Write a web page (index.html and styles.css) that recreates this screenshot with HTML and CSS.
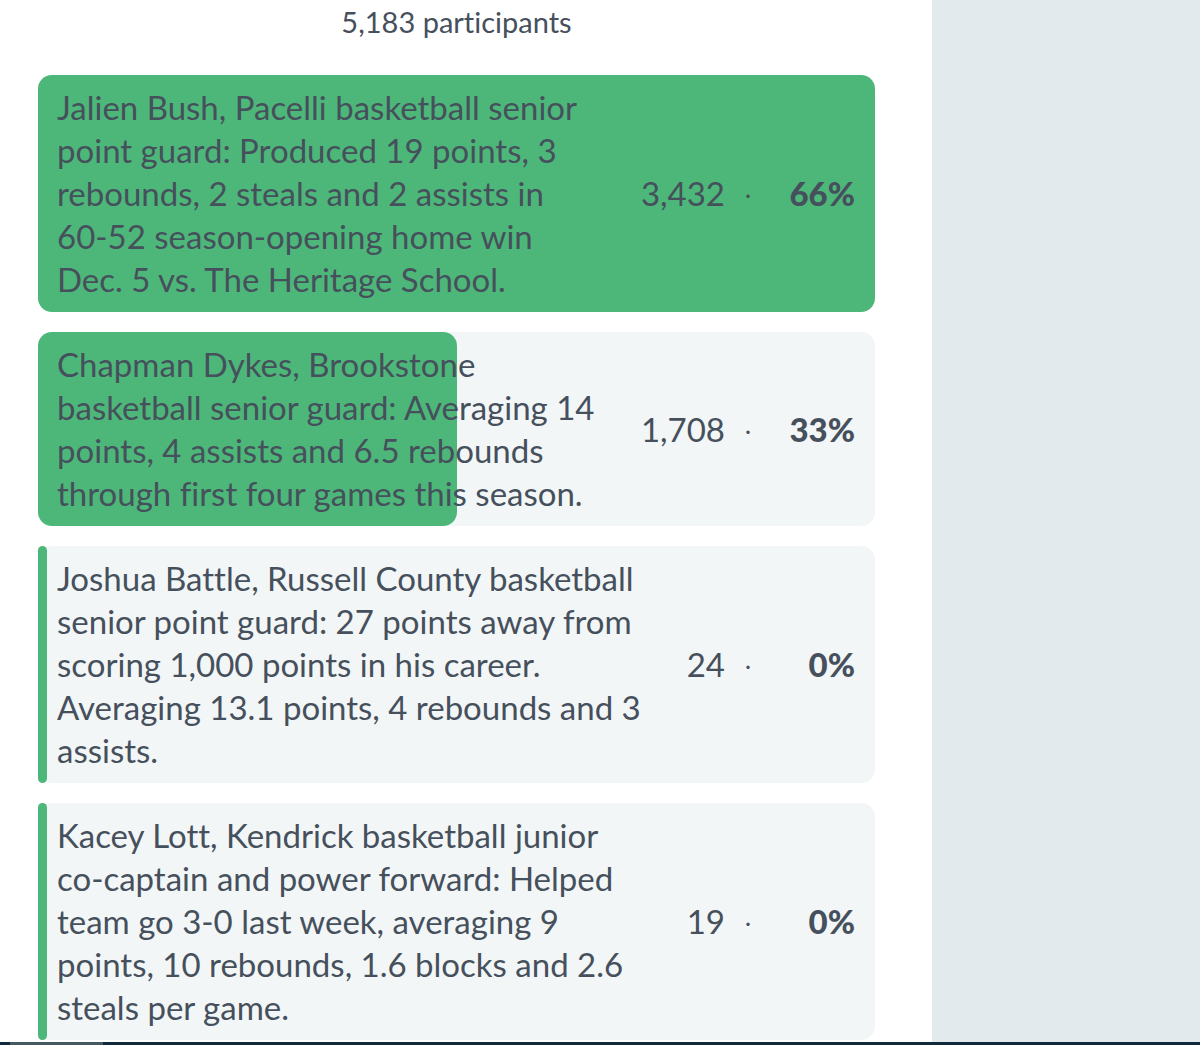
FILE: index.html
```html
<!DOCTYPE html>
<html lang="en">

<head>
  <meta charset="UTF-8">
  <meta name="viewport" content="width=device-width, initial-scale=1.0">
  <title>Poll Results</title>
  <link rel="stylesheet" href="styles.css">
</head>

<body>

  <div class="page">

    <main class="poll">

      <p class="participants">5,183 participants</p>

      <ul class="results">

        <li class="result">
          <div class="fill" style="width: 100%"></div>
          <p class="answer">Jalien Bush, Pacelli basketball senior<br>
            point guard: Produced 19 points, 3<br>
            rebounds, 2 steals and 2 assists in<br>
            60-52 season-opening home win<br>
            Dec. 5 vs. The Heritage School.</p>
          <div class="votes"><span>3,432</span><span class="dot">·</span><strong>66%</strong></div>
        </li>

        <li class="result">
          <div class="fill" style="width: 50%"></div>
          <p class="answer">Chapman Dykes, Brookstone<br>
            basketball senior guard: Averaging 14<br>
            points, 4 assists and 6.5 rebounds<br>
            through first four games this season.</p>
          <div class="votes"><span>1,708</span><span class="dot">·</span><strong>33%</strong></div>
        </li>

        <li class="result">
          <div class="fill" style="width: 1%"></div>
          <p class="answer">Joshua Battle, Russell County basketball<br>
            senior point guard: 27 points away from<br>
            scoring 1,000 points in his career.<br>
            Averaging 13.1 points, 4 rebounds and 3<br>
            assists.</p>
          <div class="votes"><span>24</span><span class="dot">·</span><strong>0%</strong></div>
        </li>

        <li class="result">
          <div class="fill" style="width: 1%"></div>
          <p class="answer">Kacey Lott, Kendrick basketball junior<br>
            co-captain and power forward: Helped<br>
            team go 3-0 last week, averaging 9<br>
            points, 10 rebounds, 1.6 blocks and 2.6<br>
            steals per game.</p>
          <div class="votes"><span>19</span><span class="dot">·</span><strong>0%</strong></div>
        </li>

      </ul>

    </main>

    <aside class="side"></aside>

  </div>

  <footer class="bottom-bar"><div class="bottom-tab"></div></footer>

</body>

</html>
```

FILE: styles.css
```css
* {
  box-sizing: border-box;
  margin: 0;
  padding: 0;
}

body {
  display: flex;
  flex-direction: column;
  min-height: 100vh;
  background-color: #ffffff;
  font-family: Lato, sans-serif;
  font-size: 33px;
  font-variant-ligatures: none;
  line-height: 43px;
  color: #46505c;
}

.page {
  flex: 1;
  display: grid;
  grid-template-columns: minmax(0, 1fr) 268px;
}

.poll {
  padding: 0 57px 2px 38px;
}

.participants {
  margin-bottom: 32px;
  font-size: 29px;
  text-align: center;
}

.results {
  display: flex;
  flex-direction: column;
  gap: 20px;
  list-style: none;
}

.result {
  position: relative;
  display: flex;
  align-items: center;
  justify-content: space-between;
  padding: 11px 20px 11px 19px;
  background-color: #f2f6f7;
  border-radius: 14px;
}

/* coloured share behind the text */
.fill {
  position: absolute;
  top: 0;
  bottom: 0;
  left: 0;
  min-width: 9px;
  background-color: #4db779;
  border-radius: 14px;
}

.answer {
  position: relative;
  white-space: nowrap;
}

.votes {
  position: relative;
  display: flex;
  white-space: nowrap;
}

.dot {
  width: 46px;
  font-weight: 300;
  text-align: center;
}

.votes strong {
  width: 84px;
  font-weight: 900;
  text-align: right;
}

.side {
  background-color: #e2eaed;
}

.bottom-bar {
  height: 3px;
  padding-left: 10px;
  background-color: #102a3c;
}

.bottom-tab {
  width: 93px;
  height: 3px;
  background-color: #465862;
}
```
